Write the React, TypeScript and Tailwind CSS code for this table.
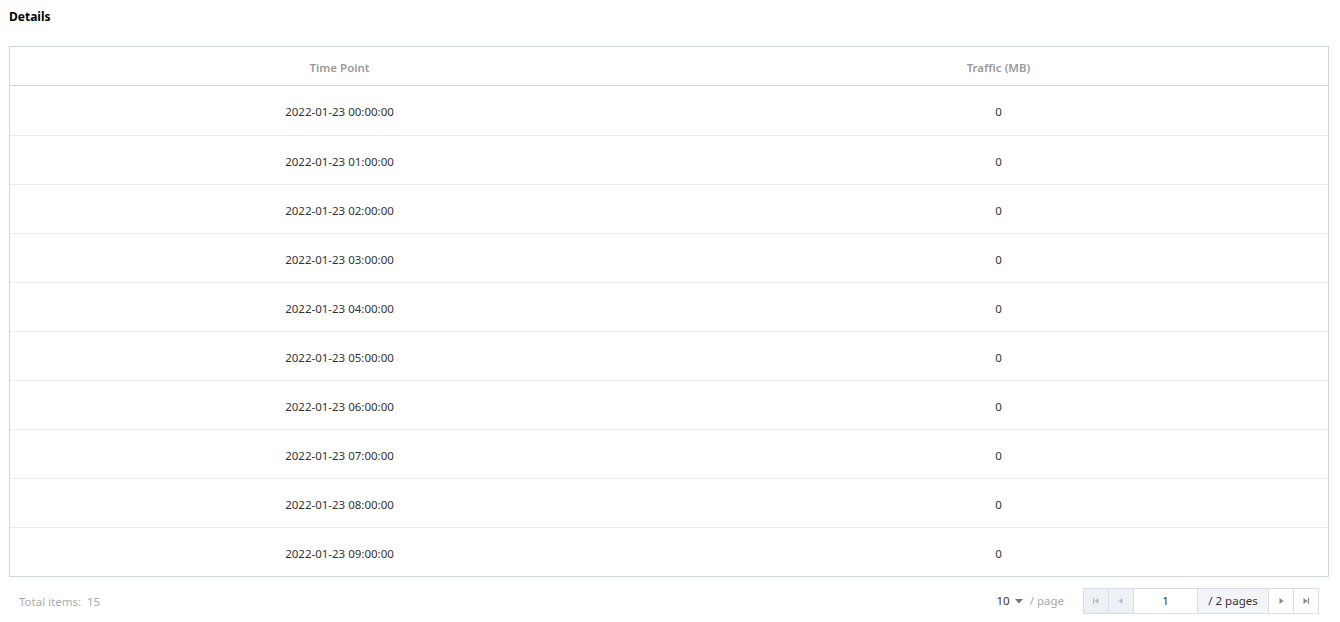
import React from "react";

const rows = Array.from({ length: 10 }, (_, i) => ({
  time: `2022-01-23 0${i}:00:00`,
  traffic: 0,
}));

function FirstIcon({ color }: { color: string }) {
  return (
    <svg width="10" height="10" viewBox="0 0 10 10">
      <rect x="2" y="2" width="1.2" height="6" fill={color} />
      <path d="M7.5 2 L3.5 5 L7.5 8 Z" fill={color} />
    </svg>
  );
}

function PrevIcon({ color }: { color: string }) {
  return (
    <svg width="10" height="10" viewBox="0 0 10 10">
      <path d="M6.5 2 L2.5 5 L6.5 8 Z" fill={color} />
    </svg>
  );
}

function NextIcon({ color }: { color: string }) {
  return (
    <svg width="10" height="10" viewBox="0 0 10 10">
      <path d="M3.5 2 L7.5 5 L3.5 8 Z" fill={color} />
    </svg>
  );
}

function LastIcon({ color }: { color: string }) {
  return (
    <svg width="10" height="10" viewBox="0 0 10 10">
      <path d="M2.5 2 L6.5 5 L2.5 8 Z" fill={color} />
      <rect x="6.8" y="2" width="1.2" height="6" fill={color} />
    </svg>
  );
}

export default function App() {
  return (
    <div className="min-h-[622px] bg-white px-[9px] pt-[8px] font-['Noto_Sans','Open_Sans',sans-serif] text-[11.5px] text-[#333]">
      <h2 className="text-[12px] font-bold leading-[17px] text-black">Details</h2>

      <div className="mt-[21px] w-[1320px] border border-[#cfd5de]">
        <div className="grid h-[39px] grid-cols-2 items-center border-b border-[#cfd5de] pt-[3px] text-center font-semibold text-[#999]">
          <div>Time Point</div>
          <div>Traffic (MB)</div>
        </div>
        {rows.map((r, i) => (
          <div
            key={r.time}
            className={
              i === rows.length - 1
                ? "grid h-[48px] grid-cols-2 items-center pt-[3px] text-center text-[#333]"
                : i === 0
                  ? "grid h-[50px] grid-cols-2 items-center border-b border-[#e9ebee] pt-[3px] text-center text-[#333]"
                  : "grid h-[49px] grid-cols-2 items-center border-b border-[#e9ebee] pt-[3px] text-center text-[#333]"
            }
          >
            <div>{r.time}</div>
            <div>{r.traffic}</div>
          </div>
        ))}
      </div>

      <div className="mt-[11px] flex w-[1310px] items-center">
        <div className="ml-[10px] pt-[2px] text-[#aaa]">Total items:&nbsp; 15</div>
        <div className="ml-auto flex items-center">
          <span className="text-[#333]">10</span>
          <svg className="ml-[5px]" width="8" height="8" viewBox="0 0 8 8">
            <path d="M0 2 L8 2 L4 6.5 Z" fill="#777" />
          </svg>
          <span className="ml-[7px] text-[#aaa]">/ page</span>
          <div className="ml-[19px] flex h-[26px] border border-[#dadfe6]">
            <div className="flex w-[25px] items-center justify-center border-r border-[#dadfe6] bg-[#edf0f4]">
              <FirstIcon color="#b5bcc6" />
            </div>
            <div className="flex w-[25px] items-center justify-center border-r border-[#dadfe6] bg-[#edf0f4]">
              <PrevIcon color="#b5bcc6" />
            </div>
            <div className="flex w-[64px] items-center justify-center border-r border-[#dadfe6] bg-white text-[#333]">
              1
            </div>
            <div className="flex w-[71px] items-center justify-center border-r border-[#dadfe6] bg-[#f2f4f7] text-[#333]">
              / 2 pages
            </div>
            <div className="flex w-[25px] items-center justify-center border-r border-[#dadfe6] bg-white">
              <NextIcon color="#888" />
            </div>
            <div className="flex w-[24px] items-center justify-center bg-white">
              <LastIcon color="#888" />
            </div>
          </div>
        </div>
      </div>
    </div>
  );
}
